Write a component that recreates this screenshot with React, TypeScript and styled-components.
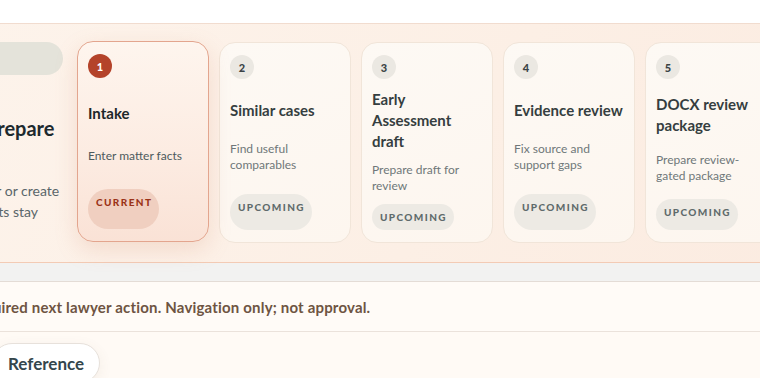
import React from "react";
import styled, { createGlobalStyle } from "styled-components";

const Global = createGlobalStyle`
  html, body { margin: 0; padding: 0; background: #fffaf5; }
  body { font-family: Lato, "Noto Sans", sans-serif; overflow: hidden; }
  * { box-sizing: border-box; }
`;

const Viewport = styled.div`
  width: 760px;
  height: 378px;
  overflow: hidden;
  background: #fffaf5;
`;

const Canvas = styled.div`
  width: 1100px;
  margin-left: -146px;
`;

const TopBar = styled.div`
  height: 23px;
  background: #ffffff;
`;

const Stepper = styled.section`
  display: flex;
  align-items: stretch;
  gap: 14px;
  padding: 18px 0 19px;
  border-top: 1px solid #f1dccf;
  border-bottom: 1px solid #f3cbb5;
  background: linear-gradient(120deg, #fdf4ec 0%, #fcefe5 55%, #fbeadf 100%);
`;

const Intro = styled.div`
  width: 209px;
  display: flex;
  flex-direction: column;
`;

const IntroTag = styled.div`
  height: 33px;
  border-radius: 17px;
  background: #e4e3da;
  color: #e4e3da;
  font-size: 12px;
  line-height: 33px;
  padding-left: 14px;
`;

const IntroTitle = styled.h2`
  margin: 40px 0 0;
  font-size: 20px;
  line-height: 26px;
  font-weight: 700;
  color: #1d2a2e;
  white-space: nowrap;
`;

const IntroText = styled.p`
  margin: 39px 0 0;
  font-size: 14px;
  line-height: 21px;
  color: #5a6669;
  white-space: nowrap;
`;

const Steps = styled.ol`
  display: flex;
  gap: 10px;
  margin: 0;
  padding: 0;
  list-style: none;
`;

const Card = styled.li<{ $current?: boolean }>`
  width: 132px;
  flex: none;
  display: grid;
  grid-template-columns: 100%;
  gap: 10px;
  padding: 12px 10px;
  border-radius: 16px;
  border: 1px solid ${(p) => (p.$current ? "#e3a58e" : "#f1e5d9")};
  background: ${(p) =>
    p.$current
      ? "linear-gradient(180deg, #fef5ee 0%, #fcebe1 60%, #fae2d6 100%)"
      : "linear-gradient(160deg, #fdf9f4 0%, #fdf6ef 100%)"};
  box-shadow: ${(p) =>
    p.$current ? "0 8px 22px rgba(214, 140, 108, 0.22)" : "none"};
  transform: ${(p) => (p.$current ? "translateY(-1px)" : "none")};
`;

const Num = styled.span<{ $current?: boolean }>`
  width: 24px;
  height: 24px;
  border-radius: 50%;
  display: flex;
  align-items: center;
  justify-content: center;
  align-self: start;
  font-size: 11px;
  font-weight: 900;
  background: ${(p) => (p.$current ? "#b4432a" : "#ebe8e2")};
  color: ${(p) => (p.$current ? "#ffffff" : "#3b4345")};
`;

const Title = styled.h3<{ $current?: boolean }>`
  margin: 0;
  font-size: 15px;
  line-height: 21px;
  font-weight: 700;
  color: ${(p) => (p.$current ? "#1c2729" : "#353e40")};
`;

const Desc = styled.p<{ $current?: boolean }>`
  margin: 0;
  font-size: 12px;
  line-height: 16px;
  color: ${(p) => (p.$current ? "#4d5a5d" : "#6f7779")};
`;

const Badge = styled.span<{ $current?: boolean }>`
  justify-self: start;
  padding: 5px 7px 0 8px;
  min-height: 26px;
  border-radius: 20px;
  font-size: 10px;
  line-height: 16px;
  font-weight: 900;
  letter-spacing: 1.4px;
  text-transform: uppercase;
  background: ${(p) => (p.$current ? "#f0cfc0" : "#edeae4")};
  color: ${(p) => (p.$current ? "#9b3318" : "#5f6a6b")};
`;

const ScrollTrack = styled.div`
  height: 19px;
  background: #f2f2f1;
  border-bottom: 1px solid #e4dcd6;
`;

const Notice = styled.div`
  height: 50px;
  display: flex;
  align-items: center;
  background: #fffbf7;
  border-bottom: 1px solid #ebe2db;
  font-size: 15px;
  font-weight: 700;
  letter-spacing: 0.18px;
  color: #6e5442;
  white-space: nowrap;
`;

const NoticeText = styled.span`
  margin-left: -14px;
`;

const Footer = styled.div`
  display: flex;
  gap: 10px;
  padding: 11px 0 0 138px;
`;

const PillButton = styled.button`
  height: 40px;
  padding: 0 15px;
  border-radius: 20px;
  border: 1px solid #e7e1db;
  background: #ffffff;
  box-shadow: 0 4px 14px rgba(120, 90, 70, 0.08);
  font-family: Lato, "Noto Sans", sans-serif;
  font-size: 17px;
  font-weight: 700;
  color: #34464c;
`;

const steps = [
  { n: 1, title: "Intake", desc: "Enter matter facts", current: true },
  { n: 2, title: "Similar cases", desc: "Find useful comparables" },
  { n: 3, title: "Early Assessment draft", desc: "Prepare draft for review" },
  { n: 4, title: "Evidence review", desc: "Fix source and support gaps" },
  { n: 5, title: "DOCX review package", desc: "Prepare review-gated package" },
];

export default function App() {
  return (
    <Viewport>
      <Global />
      <Canvas>
        <TopBar />
        <Stepper>
          <Intro>
            <IntroTag>Matter workflow</IntroTag>
            <IntroTitle>Review all and prepare</IntroTitle>
            <IntroText>
              Open an existing matter or create
              <br />a new one. All your drafts stay
            </IntroText>
          </Intro>
          <Steps>
            {steps.map((s) => (
              <Card key={s.n} $current={s.current}>
                <Num $current={s.current}>{s.n}</Num>
                <Title $current={s.current}>{s.title}</Title>
                <Desc $current={s.current}>{s.desc}</Desc>
                <Badge $current={s.current}>
                  {s.current ? "Current" : "Upcoming"}
                </Badge>
              </Card>
            ))}
          </Steps>
        </Stepper>
        <ScrollTrack />
        <Notice>
          <NoticeText>
            Current step is the required next lawyer action. Navigation only; not approval.
          </NoticeText>
        </Notice>
        <Footer>
          <PillButton>Reference</PillButton>
        </Footer>
      </Canvas>
    </Viewport>
  );
}
